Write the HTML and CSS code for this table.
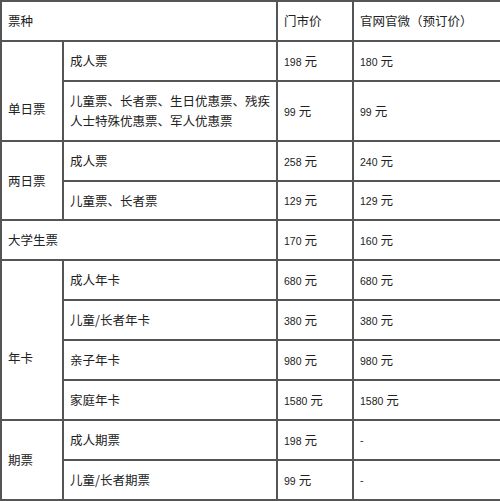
FILE: index.html
```html
<!DOCTYPE html>
<html lang="zh">
<head>
<meta charset="utf-8">
<link rel="stylesheet" href="styles.css">
</head>
<body>
<table class="prices">
  <colgroup>
    <col class="c1"><col class="c2"><col class="c3"><col class="c4">
  </colgroup>
  <tr class="r40"><td colspan="2">票种</td><td>门市价</td><td>官网官微（预订价）</td></tr>
  <tr class="r40"><td rowspan="2" class="low">单日票</td><td>成人票</td><td class="num">198 <span class="y">元</span></td><td class="num">180 <span class="y">元</span></td></tr>
  <tr class="r61"><td class="wrap">儿童票、长者票、生日优惠票、残疾人士特殊优惠票、军人优惠票</td><td class="num">99 <span class="y">元</span></td><td class="num">99 <span class="y">元</span></td></tr>
  <tr class="r40"><td rowspan="2">两日票</td><td>成人票</td><td class="num">258 <span class="y">元</span></td><td class="num">240 <span class="y">元</span></td></tr>
  <tr class="r39"><td>儿童票、长者票</td><td class="num">129 <span class="y">元</span></td><td class="num">129 <span class="y">元</span></td></tr>
  <tr class="r40"><td colspan="2">大学生票</td><td class="num">170 <span class="y">元</span></td><td class="num">160 <span class="y">元</span></td></tr>
  <tr class="r40"><td rowspan="4" class="low">年卡</td><td>成人年卡</td><td class="num">680 <span class="y">元</span></td><td class="num">680 <span class="y">元</span></td></tr>
  <tr class="r40"><td>儿童/长者年卡</td><td class="num">380 <span class="y">元</span></td><td class="num">380 <span class="y">元</span></td></tr>
  <tr class="r40"><td>亲子年卡</td><td class="num">980 <span class="y">元</span></td><td class="num">980 <span class="y">元</span></td></tr>
  <tr class="r40"><td>家庭年卡</td><td class="num">1580 <span class="y">元</span></td><td class="num">1580 <span class="y">元</span></td></tr>
  <tr class="r40"><td rowspan="2">期票</td><td>成人期票</td><td class="num">198 <span class="y">元</span></td><td class="num">-</td></tr>
  <tr class="r40"><td>儿童/长者期票</td><td class="num">99 <span class="y">元</span></td><td class="num">-</td></tr>
</table>
</body>
</html>
```
FILE: styles.css
```css
html, body {
  margin: 0;
  padding: 0;
  background: #fff;
}
.prices {
  border-collapse: collapse;
  table-layout: fixed;
  width: 500px;
  font-family: "Noto Sans CJK SC", "Noto Sans", sans-serif;
  font-size: 12.5px;
  color: #222;
}
.c1 { width: 62px; }
.c2 { width: 214px; }
.c3 { width: 76px; }
.c4 { width: 148px; }
.prices td {
  border: 2px solid #555;
  padding: 0 6px;
  vertical-align: middle;
  line-height: 20px;
  box-sizing: border-box;
}
.prices td.low {
  padding-top: 36px;
}
.r40 { height: 40px; }
.r39 { height: 39px; }
.r61 { height: 60px; }
.num {
  font-family: "Liberation Sans", sans-serif;
  font-size: 10.5px;
  padding-left: 7px;
}
.y {
  font-family: "Noto Sans CJK SC", sans-serif;
  font-size: 12.5px;
}
```
